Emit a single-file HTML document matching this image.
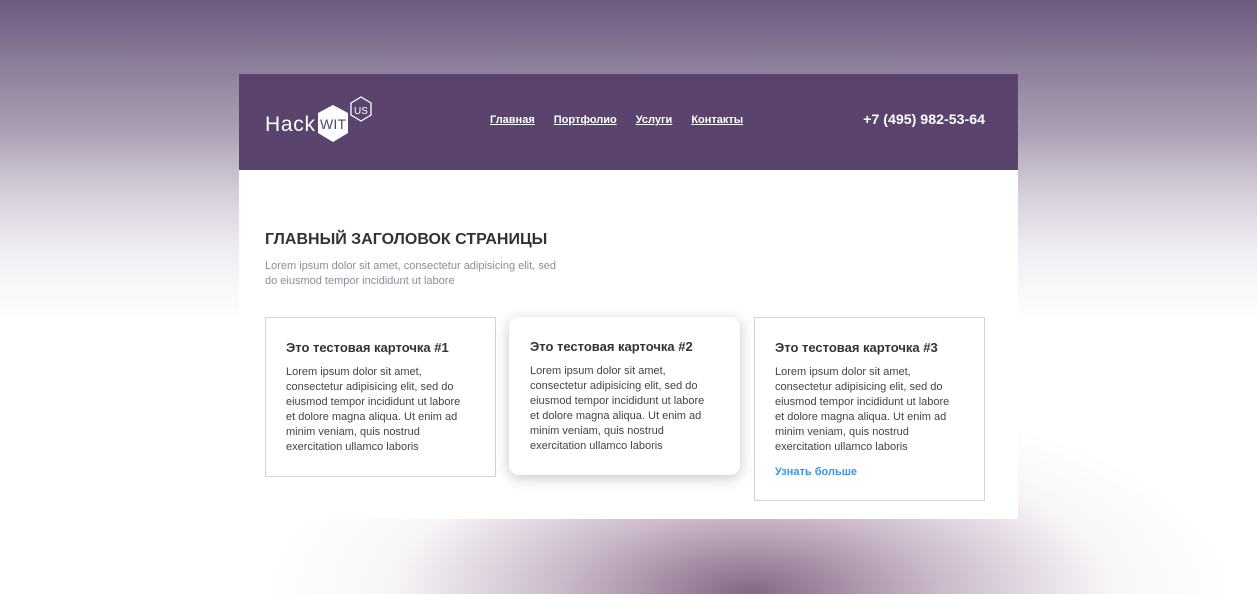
<!DOCTYPE html>
<html><head><meta charset="utf-8"><style>
*{margin:0;padding:0;box-sizing:border-box}
body{width:1257px;height:594px;overflow:hidden;font-family:"Liberation Sans",sans-serif;position:relative;
background:
radial-gradient(ellipse 480px 200px at 750px 594px, rgba(125,95,125,0.95), rgba(160,130,160,0.55) 40%, rgba(220,205,220,0.2) 75%, rgba(255,255,255,0) 100%),
linear-gradient(to bottom,#6e5a80 0px,#8a7b98 60px,#aa9fb3 130px,#d3ccd8 190px,#f0edf2 250px,#fff 320px,#fff 100%);}
.page{position:absolute;left:239px;top:74px;width:779px;height:445px;background:#fff}
.hdr{height:96px;background:#5a436c;position:relative;color:#fff}
.nav{position:absolute;left:251px;top:40px;font-size:11px;font-weight:bold}
.nav a{color:#fff;text-decoration:underline;margin-right:19px}
.phone{position:absolute;right:33px;top:38px;font-size:14.2px;font-weight:bold}
h1{position:absolute;left:26px;top:157px;font-size:16px;color:#333;font-weight:bold}
.sub{position:absolute;left:26px;top:185px;font-size:11px;line-height:15px;color:#8a8f9c;width:300px}
.card{position:absolute;top:243px;width:231px;border:1px solid #d3d3d3;padding:22px 24px 0 20px;background:#fff}
.card h3{font-size:13px;color:#333;margin-bottom:10px}
.card p{font-size:11px;line-height:15px;color:#444}
.card a{display:block;margin-top:11px;font-size:11px;font-weight:bold;color:#3b95e0;text-decoration:none}
</style></head><body>
<div class="page">
<div class="hdr">
<svg style="position:absolute;left:26px;top:22px" width="110" height="50" viewBox="0 0 110 50">
<text x="0" y="35" fill="#fff" font-family="Liberation Sans" font-size="21" font-weight="300" textLength="50">Hack</text>
<polygon points="68,9 83,17 83,37 68,46 53,37 53,17" fill="#fff"/>
<text x="55" y="33" fill="#5a436c" font-family="Liberation Sans" font-size="14" textLength="26">WIT</text>
<polygon points="96,1 106,7 106,19 96,25 86,19 86,7" fill="none" stroke="#fff" stroke-width="1.3"/>
<text x="89" y="18" fill="#fff" font-family="Liberation Sans" font-size="10">US</text>
</svg>
<div class="nav"><a>Главная</a><a>Портфолио</a><a>Услуги</a><a>Контакты</a></div>
<div class="phone">+7 (495) 982-53-64</div>
</div>
<h1>ГЛАВНЫЙ ЗАГОЛОВОК СТРАНИЦЫ</h1>
<div class="sub">Lorem ipsum dolor sit amet, consectetur adipisicing elit, sed do eiusmod tempor incididunt ut labore</div>
<div class="card" style="left:26px;height:160px"><h3>Это тестовая карточка #1</h3><p>Lorem ipsum dolor sit amet, consectetur adipisicing elit, sed do eiusmod tempor incididunt ut labore et dolore magna aliqua. Ut enim ad minim veniam, quis nostrud exercitation ullamco laboris</p></div>
<div class="card" style="left:270px;height:158px;border:none;border-radius:10px;box-shadow:0 3px 14px rgba(0,0,0,0.22);padding-top:22px;padding-left:21px"><h3>Это тестовая карточка #2</h3><p>Lorem ipsum dolor sit amet, consectetur adipisicing elit, sed do eiusmod tempor incididunt ut labore et dolore magna aliqua. Ut enim ad minim veniam, quis nostrud exercitation ullamco laboris</p></div>
<div class="card" style="left:515px;height:184px"><h3>Это тестовая карточка #3</h3><p>Lorem ipsum dolor sit amet, consectetur adipisicing elit, sed do eiusmod tempor incididunt ut labore et dolore magna aliqua. Ut enim ad minim veniam, quis nostrud exercitation ullamco laboris</p><a>Узнать больше</a></div>
</div>
</body></html>
